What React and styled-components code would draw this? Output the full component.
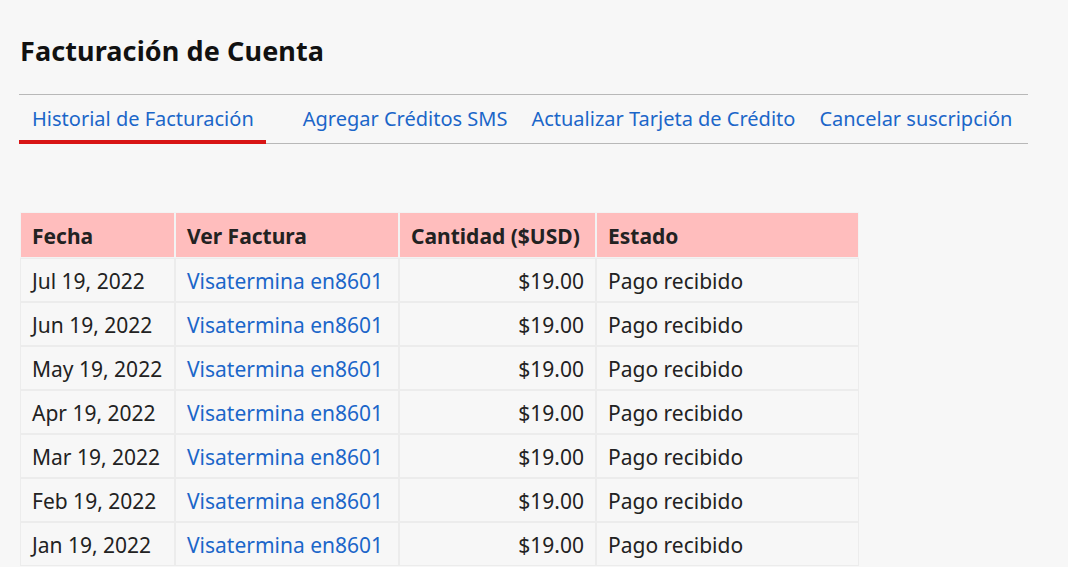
import React from 'react';
import styled, { createGlobalStyle } from 'styled-components';

const GlobalStyle = createGlobalStyle`
  html, body {
    margin: 0;
    padding: 0;
    background: #f7f7f7;
  }
  body {
    font-family: "Noto Sans", "Open Sans", sans-serif;
    color: #222;
  }
`;

const tabs = [
  'Historial de Facturación',
  'Agregar Créditos SMS',
  'Actualizar Tarjeta de Crédito',
  'Cancelar suscripción',
];

const columns = [
  { label: 'Fecha', width: 155 },
  { label: 'Ver Factura', width: 224 },
  { label: 'Cantidad ($USD)', width: 197 },
  { label: 'Estado', width: 263 },
];

const invoices = [
  'Jul 19, 2022',
  'Jun 19, 2022',
  'May 19, 2022',
  'Apr 19, 2022',
  'Mar 19, 2022',
  'Feb 19, 2022',
  'Jan 19, 2022',
];

const App = () => {
  return (
    <Page>
      <GlobalStyle />
      <Title>Facturación de Cuenta</Title>

      <TabBar>
        {tabs.map((t, i) => (
          <Tab key={t} $active={i === 0}>
            {t}
          </Tab>
        ))}
      </TabBar>

      <Table>
        <colgroup>
          {columns.map((c) => (
            <col key={c.label} style={{ width: c.width }} />
          ))}
        </colgroup>
        <thead>
          <tr>
            {columns.map((c) => (
              <Th key={c.label}>{c.label}</Th>
            ))}
          </tr>
        </thead>
        <tbody>
          {invoices.map((d) => (
            <tr key={d}>
              <Td>{d}</Td>
              <Td>
                <InvoiceLink href="#">Visatermina en8601</InvoiceLink>
              </Td>
              <Td $right>$19.00</Td>
              <Td>Pago recibido</Td>
            </tr>
          ))}
        </tbody>
      </Table>
    </Page>
  );
};

const Page = styled.div`
  padding: 33px 40px 0 19px;
  height: 567px;
  box-sizing: border-box;
  overflow: hidden;
`;

const Title = styled.h1`
  margin: 0 0 25px 1px;
  font-size: 27px;
  line-height: 36px;
  font-weight: 700;
  letter-spacing: 0.1px;
  color: #111;
`;

const TabBar = styled.nav`
  display: flex;
  border-top: 1px solid #b8b8b8;
  border-bottom: 1px solid #b8b8b8;
  height: 48px;
  margin-bottom: 68px;
`;

const Tab = styled.a`
  display: flex;
  align-items: center;
  padding: 0 12px;
  font-size: 20px;
  color: #1b66c9;
  white-space: nowrap;
  box-sizing: border-box;
  border-bottom: 4px solid ${(p) => (p.$active ? '#d81515' : 'transparent')};
  margin-bottom: -1px;
  padding-top: 2px;

  &:first-child {
    padding-left: 13px;
    margin-right: 25px;
  }
`;

const Table = styled.table`
  border-collapse: separate;
  border-spacing: 0;
  table-layout: fixed;
  width: 839px;
  margin-left: 1px;
  font-size: 21px;
`;

const Th = styled.th`
  background: #ffbdbd;
  text-align: left;
  font-weight: 700;
  font-size: 21px;
  color: #222;
  height: 46px;
  padding: 1px 11px 0;
  border: 1px solid #f3f3f3;
  box-sizing: border-box;
  white-space: nowrap;
`;

const Td = styled.td`
  height: 44px;
  padding: 1px 11px 0;
  border: 1px solid #ececec;
  background: #f7f7f7;
  text-align: ${(p) => (p.$right ? 'right' : 'left')};
  white-space: nowrap;
  box-sizing: border-box;
`;

const InvoiceLink = styled.a`
  color: #1b66c9;
  text-decoration: none;
`;

export default App;
